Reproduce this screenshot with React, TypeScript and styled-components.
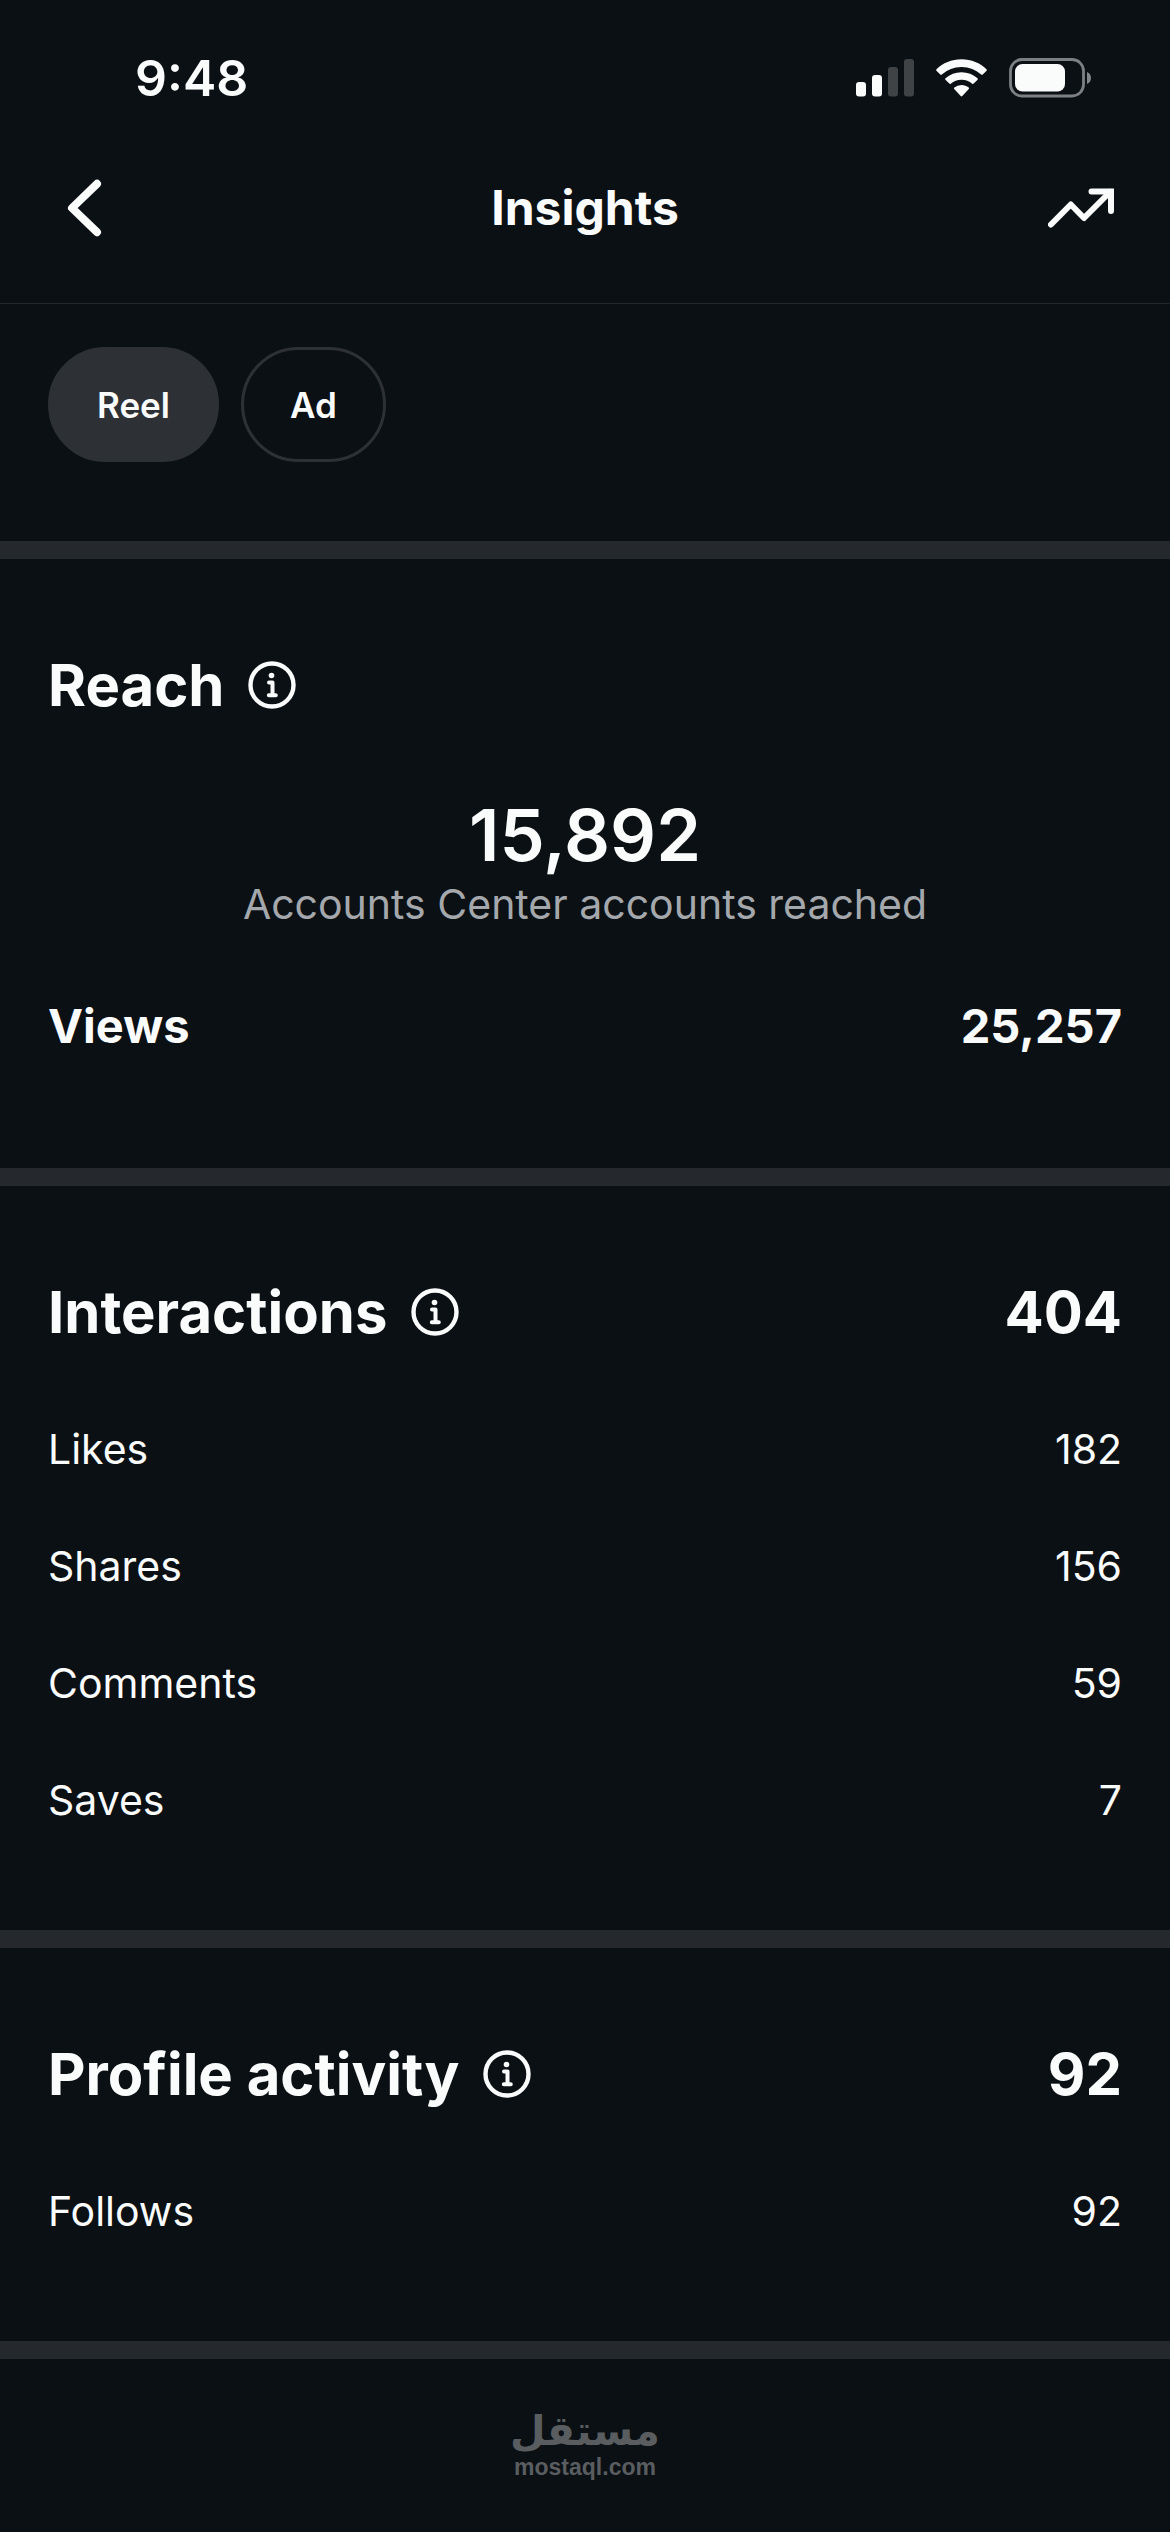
import React, { useState } from "react";
import styled, { createGlobalStyle } from "styled-components";

const color = {
  page: "#0b1014",
  text: "#fafbfb",
  muted: "#a4a8ac",
  line: "#24282c",
  band: "#25282d",
  chip: "#2d3135",
  mark: "#595d60",
};

const GlobalStyle = createGlobalStyle`
  *, *::before, *::after { box-sizing: border-box; }
  body {
    margin: 0;
    background: ${color.page};
    color: ${color.text};
    font-family: Inter, "Liberation Sans", sans-serif;
  }
  h1, h2, p, dl, dt, dd { margin: 0; }
`;

const Screen = styled.div`
  min-height: 100vh;
  display: flex;
  flex-direction: column;
  background: ${color.page};
`;

const StatusBar = styled.div`
  display: flex;
  align-items: center;
  justify-content: space-between;
  padding: 42px 78px 0 135px;
`;

const Clock = styled.time`
  font-size: 50px;
  line-height: 72px;
  font-weight: 600;
`;

const StatusIcons = styled.div`
  display: flex;
  align-items: center;
  gap: 22px;
`;

const Header = styled.header`
  display: grid;
  grid-template-columns: 1fr auto 1fr;
  align-items: center;
  height: 190px;
  padding: 0 56px 2px;
  border-bottom: 1px solid ${color.line};
`;

const Title = styled.h1`
  font-size: 48px;
  line-height: 60px;
  font-weight: 700;
`;

const IconButton = styled.button<{ $end?: boolean }>`
  display: flex;
  justify-self: ${(p) => (p.$end ? "end" : "start")};
  padding: 0;
  border: 0;
  background: none;
  color: inherit;
  cursor: pointer;
`;

const Chips = styled.nav`
  display: flex;
  gap: 22px;
  padding: 43px 48px 79px;
`;

const Chip = styled.button<{ $active: boolean }>`
  height: 115px;
  padding: 0 46px;
  border: 3px solid ${color.chip};
  border-radius: 58px;
  background: ${(p) => (p.$active ? color.chip : "transparent")};
  color: inherit;
  font-family: inherit;
  font-size: 35px;
  line-height: 48px;
  font-weight: 600;
  cursor: pointer;
`;

const Section = styled.section`
  border-top: 18px solid ${color.band};
  padding: 90px 48px 72px;
`;

const SectionHead = styled.div`
  display: flex;
  align-items: center;
  justify-content: space-between;
  margin-bottom: 42px;
  font-size: 58px;
  line-height: 72px;
  font-weight: 700;
`;

const SectionTitle = styled.div`
  display: flex;
  align-items: center;
  gap: 24px;
`;

const Heading = styled.h2`
  font: inherit;
`;

const Summary = styled.div`
  padding: 30px 0 24px;
  text-align: center;
`;

const BigNumber = styled.p`
  font-size: 72px;
  line-height: 84px;
  font-weight: 600;
`;

const Caption = styled.p`
  color: ${color.muted};
  font-size: 41px;
  line-height: 54px;
`;

const Rows = styled.dl`
  display: flex;
  flex-direction: column;
`;

const Row = styled.div<{ $strong?: boolean }>`
  display: flex;
  align-items: center;
  justify-content: space-between;
  height: ${(p) => (p.$strong ? 141 : 117)}px;
  font-size: ${(p) => (p.$strong ? 47 : 41)}px;
  font-weight: ${(p) => (p.$strong ? 700 : 400)};
`;

const Footer = styled.footer`
  border-top: 18px solid ${color.band};
  padding: 48px;
  display: flex;
  flex-direction: column;
  align-items: center;
  color: ${color.mark};
`;

const BrandArabic = styled.span`
  font-family: "DejaVu Sans", sans-serif;
  font-size: 41px;
  line-height: 48px;
  font-weight: 700;
`;

const BrandLatin = styled.span`
  font-family: "Liberation Sans", Arial, sans-serif;
  font-size: 23px;
  line-height: 24px;
  font-weight: 700;
`;

const SignalIcon = () => (
  <svg width="58" height="38" viewBox="0 0 58 38" fill="currentColor" aria-hidden="true">
    <rect x="0" y="23" width="10" height="14.5" rx="3" />
    <rect x="16" y="16" width="10" height="21.5" rx="3" />
    <rect x="32" y="8" width="10" height="29.5" rx="3" opacity="0.22" />
    <rect x="48" y="0" width="10" height="37.5" rx="3" opacity="0.22" />
  </svg>
);

const WifiIcon = () => (
  <svg width="51" height="38" viewBox="0 0 51 38" fill="currentColor" aria-hidden="true">
    <path d="M25.5 0.3C35.3 0.3 44.2 4 50.5 10.2c.5.5.5 1 .1 1.5L46.7 15.6c-.4.5-1 .5-1.5 0A29 29 0 0 0 25.5 8 29 29 0 0 0 5.800 15.600c-.5.5-1.100.5-1.500 0L.4 11.700c-.4-.5-.4-1 .1-1.500C6.800 4 15.700.3 25.500.3z" />
    <path d="M25.500 13.200c6.100 0 11.700 2.200 16 6 .5.5.5 1 .1 1.500l-3.900 3.900c-.5.500-1 .500-1.500.1a16 16 0 0 0-10.700-4 16 16 0 0 0-10.700 4c-.5.400-1 .400-1.500-.1l-3.900-3.900c-.4-.5-.4-1 .1-1.500a24 24 0 0 1 16-6z" />
    <path d="M25.500 26c2.700 0 5.200.900 7.200 2.500.5.4.5 1 .1 1.500l-6.500 7c-.5.5-1.100.5-1.600 0l-6.500-7c-.4-.5-.4-1.100.1-1.500a11.500 11.500 0 0 1 7.200-2.500z" />
  </svg>
);

const BatteryIcon = () => (
  <svg width="83" height="40" viewBox="0 0 83 40" fill="currentColor" aria-hidden="true">
    <rect x="1.5" y="1.5" width="73" height="36.5" rx="11.5" fill="none" stroke="currentColor" strokeWidth="2.8" opacity="0.48" />
    <rect x="6" y="6" width="50" height="27.5" rx="7.5" />
    <path d="M78 14c2.5 1 4 3.200 4 6s-1.500 5-4 6z" opacity="0.5" />
  </svg>
);

const BackIcon = () => (
  <svg width="56" height="60" viewBox="0 0 56 60" fill="none" stroke="currentColor" strokeWidth="8" strokeLinecap="round" strokeLinejoin="round" aria-hidden="true">
    <path d="M41 5.800 16 30l25 24.200" />
  </svg>
);

const TrendIcon = () => (
  <svg width="66" height="40" viewBox="0 0 66 40" fill="none" stroke="currentColor" strokeWidth="6" strokeLinecap="round" strokeLinejoin="round" aria-hidden="true">
    <path d="M3 36.5 22.800 16.500 36 30 62 4" />
    <path d="M43.500 3.500H63V23" strokeLinejoin="miter" />
  </svg>
);

const InfoIcon = () => (
  <svg width="48" height="48" viewBox="0 0 48 48" fill="none" stroke="currentColor" aria-hidden="true">
    <circle cx="24" cy="24" r="21.5" strokeWidth="4.4" />
    <circle cx="23.5" cy="14.5" r="2.8" fill="currentColor" stroke="none" />
    <path d="M21 21.500h3.500V34M20.800 34.200h7" strokeWidth="4" strokeLinecap="round" strokeLinejoin="round" />
  </svg>
);

type Metric = { label: string; value: string };

const MetricRows = ({ items, strong }: { items: Metric[]; strong?: boolean }) => (
  <Rows>
    {items.map((m) => (
      <Row key={m.label} $strong={strong}>
        <dt>{m.label}</dt>
        <dd>{m.value}</dd>
      </Row>
    ))}
  </Rows>
);

const MetricHead = ({ title, total }: { title: string; total?: string }) => (
  <SectionHead>
    <SectionTitle>
      <Heading>{title}</Heading>
      <IconButton type="button" aria-label={`About ${title}`}>
        <InfoIcon />
      </IconButton>
    </SectionTitle>
    {total && <span>{total}</span>}
  </SectionHead>
);

const interactions: Metric[] = [
  { label: "Likes", value: "182" },
  { label: "Shares", value: "156" },
  { label: "Comments", value: "59" },
  { label: "Saves", value: "7" },
];

export default function App() {
  const [tab, setTab] = useState("Reel");

  return (
    <Screen>
      <GlobalStyle />
      <StatusBar>
        <Clock>9:48</Clock>
        <StatusIcons>
          <SignalIcon />
          <WifiIcon />
          <BatteryIcon />
        </StatusIcons>
      </StatusBar>

      <Header>
        <IconButton type="button" aria-label="Back">
          <BackIcon />
        </IconButton>
        <Title>Insights</Title>
        <IconButton type="button" aria-label="Trends" $end>
          <TrendIcon />
        </IconButton>
      </Header>

      <main>
        <Chips>
          {["Reel", "Ad"].map((name) => (
            <Chip
              key={name}
              type="button"
              $active={tab === name}
              aria-pressed={tab === name}
              onClick={() => setTab(name)}
            >
              {name}
            </Chip>
          ))}
        </Chips>

        <Section>
          <MetricHead title="Reach" />
          <Summary>
            <BigNumber>15,892</BigNumber>
            <Caption>Accounts Center accounts reached</Caption>
          </Summary>
          <MetricRows strong items={[{ label: "Views", value: "25,257" }]} />
        </Section>

        <Section>
          <MetricHead title="Interactions" total="404" />
          <MetricRows items={interactions} />
        </Section>

        <Section>
          <MetricHead title="Profile activity" total="92" />
          <MetricRows items={[{ label: "Follows", value: "92" }]} />
        </Section>
      </main>

      <Footer>
        <BrandArabic lang="ar" dir="rtl">مستقل</BrandArabic>
        <BrandLatin>mostaql.com</BrandLatin>
      </Footer>
    </Screen>
  );
}
